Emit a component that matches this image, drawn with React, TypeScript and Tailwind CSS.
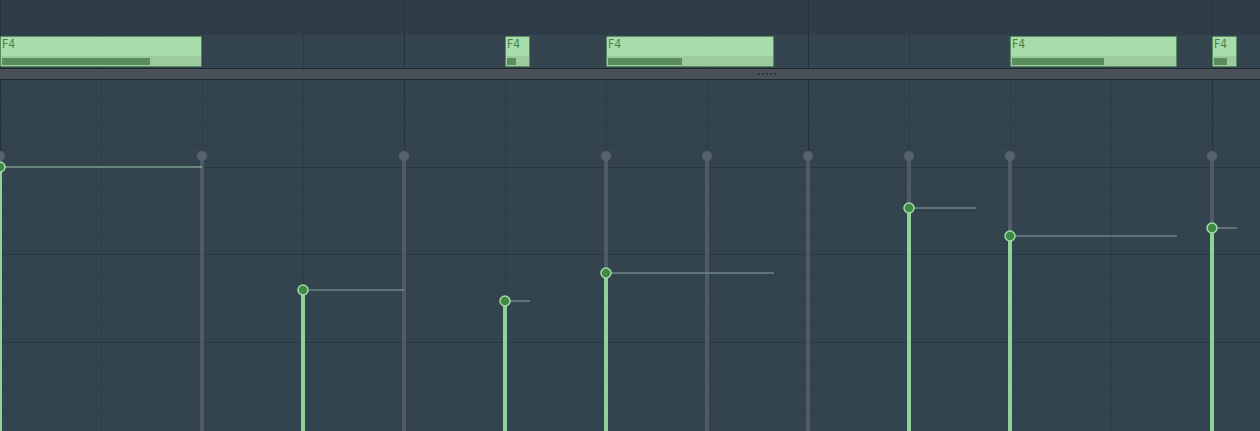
import React from 'react';

// beat = 101px, bar = 4 beats
const BEAT = 101;
const beats = Array.from({ length: 13 }, (_, i) => i * BEAT);

const topNotes = [
  { x: 0, w: 202, vel: 148 },
  { x: 505, w: 25, vel: 9 },
  { x: 606, w: 168, vel: 74 },
  { x: 1010, w: 167, vel: 92 },
  { x: 1212, w: 25, vel: 13 },
];

// velocity lane, y relative to lane top (lane starts at y=80)
const ghostStems = [0, 202, 404, 606, 707, 808, 909, 1010, 1212];
const velNotes = [
  { x: 0, y: 87, end: 202, bright: true },
  { x: 303, y: 210, end: 404 },
  { x: 505, y: 221, end: 530 },
  { x: 606, y: 193, end: 774 },
  { x: 909, y: 128, end: 976 },
  { x: 1010, y: 156, end: 1177 },
  { x: 1212, y: 148, end: 1237 },
];

function GridLines({ height }: { height: number }) {
  return (
    <svg className="absolute inset-0" width={1260} height={height}>
      {beats.map((x) => (
        <rect
          key={x}
          x={x}
          y={0}
          width={1}
          height={height}
          fill={x % 404 === 0 ? '#243140' : '#2c3a46'}
        />
      ))}
    </svg>
  );
}

function Note({ x, w, vel }: { x: number; w: number; vel: number }) {
  return (
    <div
      className="absolute top-[36px] h-[31px] rounded-[1px] border border-[#5a8a61] bg-[#a8dcab] overflow-hidden"
      style={{ left: x, width: w }}
    >
      <div className="absolute left-0 right-0 bottom-0 h-[10px] bg-[#9bcb9e]" />
      <span className="absolute left-[1px] top-[0px] text-[12px] leading-[14px] text-[#4a7f50] font-['DejaVu_Sans_Condensed',sans-serif]">
        F4
      </span>
      <div
        className="absolute left-[1px] bottom-[1px] h-[7px] bg-[#5a8d5e]"
        style={{ width: vel }}
      />
    </div>
  );
}

export default function App() {
  const laneH = 351;
  const rows = Array.from({ length: 16 }, (_, k) => k);

  return (
    <div className="w-[1260px] h-[431px] flex flex-col bg-[#34444f] overflow-hidden">
      {/* note lane */}
      <div className="relative h-[68px] flex flex-col">
        <div className="h-[35px] bg-[#2f3d49]" />
        <div className="h-[33px] bg-[#35454f]" />
        <GridLines height={68} />
        {topNotes.map((n) => (
          <Note key={n.x} {...n} />
        ))}
      </div>

      {/* splitter */}
      <div className="relative h-[12px] border-y border-[#1e2830] bg-[#4a5058] flex items-center justify-end pr-[484px]">
        <div className="flex gap-[2px]">
          {[0, 1, 2, 3, 4].map((i) => (
            <div key={i} className="w-[2px] h-[2px] bg-[#2c323a]" />
          ))}
        </div>
      </div>

      {/* velocity lane */}
      <div className="relative flex-1">
        <svg className="absolute inset-0" width={1260} height={laneH}>
          {rows.map((k) => (
            <rect
              key={k}
              x={0}
              y={Math.round(k * 21.9) - 1}
              width={1260}
              height={1}
              fill={k % 4 === 0 ? '#2a3743' : '#2f3e49'}
            />
          ))}
          {beats.map((x) => (
            <rect
              key={x}
              x={x}
              y={0}
              width={1}
              height={laneH}
              fill={x % 404 === 0 ? '#263340' : '#2e3c47'}
            />
          ))}
          {ghostStems.map((x) => (
            <g key={x}>
              <rect x={x - 2} y={76} width={4} height={laneH} fill="#4f5c67" />
              <circle cx={x} cy={76} r={5} fill="#56636e" />
            </g>
          ))}
          {velNotes.map((n) => (
            <g key={n.x}>
              <rect
                x={n.x + 4}
                y={n.y - 0.5}
                width={n.end - n.x - 4}
                height={1}
                fill={n.bright ? '#a6cfb4' : '#8aa2a8'}
              />
              <rect x={n.x - 2} y={n.y} width={4} height={laneH} fill="#8fd496" />
              <circle cx={n.x} cy={n.y} r={5} fill="#3f8846" stroke="#a3dba8" strokeWidth={1.5} />
            </g>
          ))}
        </svg>
      </div>
    </div>
  );
}
